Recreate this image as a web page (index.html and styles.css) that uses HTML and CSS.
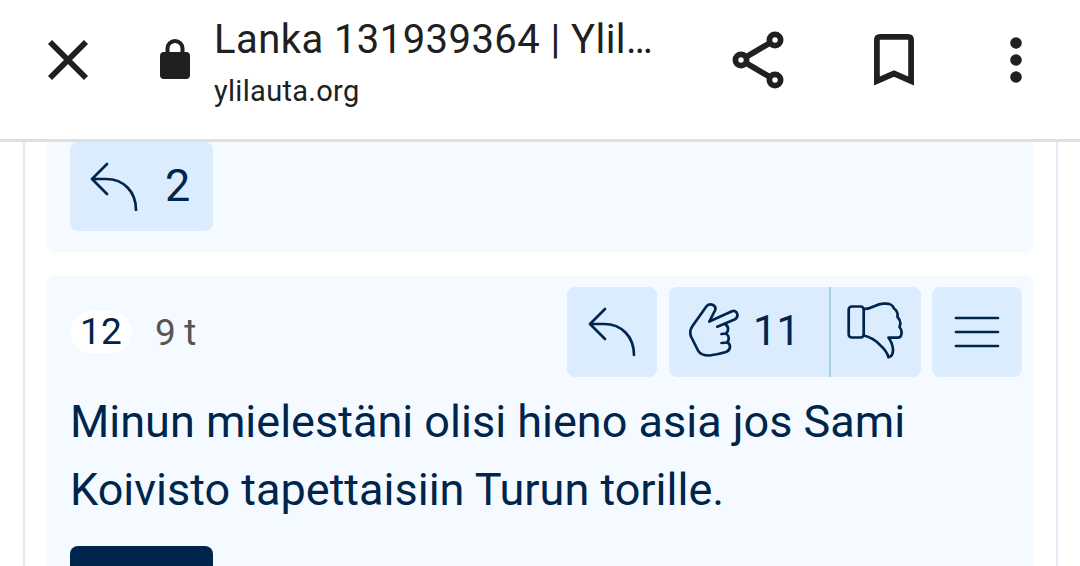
FILE: index.html
```
<!DOCTYPE html>
<html lang="fi">
<head>
    <meta charset="UTF-8">
    <meta name="viewport" content="width=device-width, initial-scale=1.0">
    <title>Lanka 131939364 | Ylilauta</title>
    <link rel="stylesheet" href="styles.css">
</head>
<body>
    <header class="toolbar">
        <svg class="icon-close" width="42" height="42" viewBox="0 0 42 42">
            <path d="M3 3L39 39M39 3L3 39"/>
        </svg>
        <svg class="icon-lock" width="32" height="42" viewBox="0 0 32 42">
            <rect x="1" y="14" width="30" height="27" rx="4"/>
            <path d="M8.500 15V10.500a7.500 7.500 0 0 1 15 0V15"/>
        </svg>
        <div class="page-info">
            <div class="page-title">Lanka 131939364 | Ylil…</div>
            <div class="page-domain">ylilauta.org</div>
        </div>
        <svg class="icon-share" width="52" height="58" viewBox="0 0 52 58">
            <path d="M9 29L43 9M9 29L43 49"/>
            <circle cx="9" cy="29" r="5.600"/>
            <circle cx="43" cy="9" r="5.600"/>
            <circle cx="43" cy="49" r="5.600"/>
        </svg>
        <svg class="icon-bookmark" width="40" height="52" viewBox="0 0 40 52">
            <path d="M2.900 47V6q0-3.100 3.100-3.100H34q3.100 0 3.100 3.100V47L20 39.500Z"/>
        </svg>
        <svg class="icon-dots" width="12" height="46" viewBox="0 0 12 46">
            <circle cx="6" cy="6" r="5.800"/>
            <circle cx="6" cy="23" r="5.800"/>
            <circle cx="6" cy="40" r="5.800"/>
        </svg>
    </header>

    <main class="thread">
        <article class="post post-previous">
            <button class="button replies">
                <svg class="icon" width="50" height="50" viewBox="0 0 50 50">
                    <path d="M18 3L3 18L18 33M3 18H17C35 18 47 31 47 49"/>
                </svg>
                <span>2</span>
            </button>
        </article>

        <article class="post">
            <div class="post-header">
                <span class="post-number">12</span>
                <time class="post-time">9 t</time>
                <div class="actions">
                    <button class="button square reply">
                        <svg class="icon" width="50" height="50" viewBox="0 0 50 50">
                            <path d="M18 2L3 17L18 32M3 17H17C35 17 47 30 47 48"/>
                        </svg>
                    </button>
                    <div class="votes">
                        <button class="button upvote">
                            <svg class="icon" width="50" height="60" viewBox="0 0 50 60">
                                <path d="M28.300 24.700L45.500 17.500C50.500 15 48.500 7.500 43 9.200L20.300 19.500L26 8.500C28 3.500 21.500 .500 17.700 4L3.500 24Q0 29 2 34.500L9 48.500Q11.500 53.500 20.500 53.500Q29 52.500 37 50C42 48 42 42.500 38.500 40.500"/>
                                <path d="M36 22C40 24.500 40 29 37 31.500L32.500 32M37 31.500C40.500 34 40.500 38 38 40.500L32.500 41"/>
                            </svg>
                            <span>11</span>
                        </button>
                        <button class="button downvote">
                            <svg class="icon" width="58" height="60" viewBox="0 -1 58 60">
                                <rect x="1.700" y="3.500" width="15" height="31" rx="3"/>
                                <path d="M16.700 6C26 6 28 1 36 .700C43 0 45.500 1.500 47 5.500C50 7.500 51 10 50.500 14C53.500 17 54 20.500 52.500 24C55 27 55 30 54 32.500Q53.500 34.700 50.500 34.700H41.500C47 42 48 53 41.500 54.300C40 49 36.500 45 33 42Q26 34.500 16.700 32.500"/>
                            </svg>
                        </button>
                    </div>
                    <button class="button square">
                        <svg class="icon" width="46" height="34" viewBox="0 0 46 34">
                            <path d="M2 3H44M2 17H44M2 31H44"/>
                        </svg>
                    </button>
                </div>
            </div>
            <p class="post-text">Minun mielestäni olisi hieno asia jos Sami Koivisto tapettaisiin Turun torille.</p>
            <div class="post-badge"></div>
        </article>
    </main>
</body>
</html>
```
FILE: styles.css
```
* {
    box-sizing: border-box;
}
body {
    margin: 0;
    height: 566px;
    overflow: hidden;
    background: #fff;
    color: #00254d;
    font-family: Roboto, sans-serif;
}
svg {
    display: block;
    flex: none;
}
.toolbar {
    display: flex;
    align-items: center;
    height: 142px;
    padding: 0 58px 20px 47px;
    border-bottom: 3px solid #dde0e1;
    color: #202020;
}
.toolbar svg {
    fill: none;
    stroke: currentColor;
    stroke-width: 5.8;
}
.toolbar .icon-lock {
    margin: 0 23px 2px 70px;
    stroke-width: 4;
}
.icon-lock rect, .icon-dots circle {
    fill: currentColor;
    stroke: none;
}
.toolbar .icon-share {
    margin-left: auto;
}
.icon-share circle {
    fill: #fff;
}
.icon-bookmark {
    margin: 0 96px 0 90px;
}
.page-info {
    padding-top: 11px;
    white-space: nowrap;
}
.page-title {
    font-size: 40px;
    line-height: 52px;
    letter-spacing: 0.43px;
}
.page-domain {
    font-size: 29px;
    line-height: 50px;
    letter-spacing: 0.3px;
}
.thread {
    height: 424px;
    margin: 0 22px 0 23px;
    padding: 0 23px 0 22px;
    border: solid #dfeaf5;
    border-width: 0 2px;
    overflow: hidden;
}
.post {
    height: 320px;
    padding: 11px 11px 0 23px;
    background: #f4faff;
    border-radius: 8px;
}
.post-previous {
    height: 110px;
    margin-bottom: 24px;
    padding-top: 0;
    border-radius: 0 0 8px 8px;
}
.button {
    display: flex;
    align-items: center;
    height: 90px;
    padding: 0;
    border: none;
    border-radius: 8px;
    background: #dbecfe;
    color: #00254d;
    font-family: inherit;
    cursor: pointer;
}
.button span {
    padding-bottom: 3px;
}
.icon {
    fill: none;
    stroke: currentColor;
    stroke-width: 2.7;
    stroke-linecap: round;
    stroke-linejoin: round;
}
.replies {
    width: 143px;
    height: 89px;
    padding: 0 0 2px 19px;
    gap: 26px;
    font-size: 45px;
}
.replies span {
    padding-bottom: 0;
}
.post-header {
    display: flex;
    align-items: center;
    height: 90px;
    font-size: 37px;
    letter-spacing: 0.3px;
}
.post-number {
    width: 62px;
    height: 42px;
    border-radius: 21px;
    background: #fff;
    line-height: 42px;
    text-align: center;
}
.post-time {
    margin-left: 23px;
    color: #555;
    letter-spacing: -0.3px;
}
.actions {
    display: flex;
    gap: 11px;
    margin-left: auto;
}
.square {
    width: 90px;
    justify-content: center;
}
.reply {
    margin-right: 1px;
}
.votes {
    display: flex;
}
.upvote {
    width: 162px;
    padding-left: 20px;
    gap: 14px;
    border-right: 2px solid #a9d0e6;
    border-radius: 8px 0 0 8px;
    font-size: 42px;
}
.downvote {
    width: 90px;
    padding-left: 16px;
    border-radius: 0 8px 8px 0;
}
.post-text {
    margin: 11px 0 0;
    font-size: 45px;
    line-height: 68px;
}
.post-badge {
    width: 143px;
    height: 60px;
    margin-top: 22px;
    border-radius: 8px;
    background: #00254d;
}
```
